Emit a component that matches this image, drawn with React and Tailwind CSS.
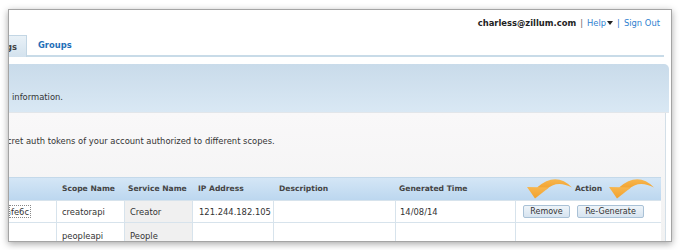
import React from "react";

function Arrow({ className }) {
  return (
    <svg className={className} width="48" height="22" viewBox="0 0 48 22">
      <defs>
        <linearGradient id="ag" x1="0" y1="0" x2="0" y2="1">
          <stop offset="0" stopColor="#f7b64e" />
          <stop offset="1" stopColor="#f2a12c" />
        </linearGradient>
      </defs>
      <path d="M47 10.5 Q31 -6 12 10.5 L21 12.5 Q32 2.5 47 10.5 Z" fill="url(#ag)" />
      <path d="M2 10 L24 10.5 L10 21.5 Z" fill="url(#ag)" />
    </svg>
  );
}

const cols = "grid grid-cols-[48px_68px_68px_81px_122px_120px_145px]";

export default function App() {
  return (
    <div className="w-[683px] h-[250px] bg-white pt-[9px] pl-[8px] font-['DejaVu_Sans',Verdana,sans-serif] text-[#333]">
      <div className="relative w-[664px] h-[233px] border border-[#a4a4a4] bg-white shadow-[0_2px_7px_rgba(0,0,0,0.35)] overflow-hidden flex flex-col">
        {/* header */}
        <div className="h-[25px] flex items-center justify-end pr-[11px] text-[8.4px] leading-[10px]">
          <span className="font-bold text-[#222]">charless@zillum.com</span>
          <span className="mx-[4px] text-[#666]">|</span>
          <span className="text-[#2f7fd0]">Help</span>
          <span className="ml-[1px] w-0 h-0 border-l-[3px] border-r-[3px] border-t-[4px] border-l-transparent border-r-transparent border-t-[#222]" />
          <span className="mx-[4px] text-[#2f7fd0]">|</span>
          <span className="text-[#2f7fd0]">Sign Out</span>
        </div>
        {/* tabs */}
        <div className="h-[22px] flex">
          <div className="w-[18px] h-[22px] overflow-hidden flex justify-end items-center pr-[9px] bg-gradient-to-b from-[#e9f1f7] to-[#d3e2ee] border-t border-r border-[#c3d6e4] text-[8.4px] font-bold text-[#444] leading-[10px]">
            <span className="whitespace-nowrap">Settings</span>
          </div>
          <div className="flex-1 mr-[7px] border-b-2 border-[#c8dbe8] flex items-center pl-[11px] pb-[1px]">
            <span className="text-[8.4px] font-bold text-[#1f6fb8] leading-[10px]">Groups</span>
          </div>
        </div>
        <div className="h-[7px]" />
        {/* blue panel */}
        <div className="h-[49px] mr-[2px] rounded-tr-[5px] bg-gradient-to-b from-[#c9dbea] to-[#d9e8f4] flex items-end pl-[3px] pb-[10px] border-b border-[#e2e6ea]">
          <span className="text-[8.4px] leading-[10px] text-[#333]">information.</span>
        </div>
        {/* grey panel */}
        <div className="flex-1 mr-[5px] border-r border-[#d3dfe8] bg-gradient-to-b from-[#f9f8f9] to-[#f2f2f2] flex flex-col">
          <div className="h-[64px] pt-[23px] overflow-hidden">
            <div className="-ml-[2px] text-[8.4px] leading-[10px] whitespace-nowrap">cret auth tokens of your account authorized to different scopes.</div>
          </div>
          <div className="w-[652px] flex-1 flex flex-col">
            <div className={`${cols} h-[23px] bg-gradient-to-b from-[#d4e6f6] to-[#bcd7ef] border-t border-[#c4d9ea] text-[7.6px] font-bold text-[#444] leading-[10px] items-center`}>
              <div />
              <div className="pl-[5px]">Scope Name</div>
              <div className="pl-[3px]">Service Name</div>
              <div className="pl-[5px]">IP Address</div>
              <div className="pl-[5px]">Description</div>
              <div className="pl-[3px]">Generated Time</div>
              <div className="text-center">Action</div>
            </div>
            <div className={`${cols} h-[23px] bg-white border-t border-b border-[#d7e3ec] text-[8.4px] leading-[10px]`}>
              <div className="flex items-center border-r border-[#d7e3ec]">
                <div className="w-[22px] h-[13px] border border-dotted border-[#888] overflow-hidden flex justify-end items-center pr-[1px]">
                  <span className="whitespace-nowrap">8c4afe6c</span>
                </div>
              </div>
              <div className="flex items-center pl-[5px] border-r border-[#d7e3ec]">creatorapi</div>
              <div className="flex items-center pl-[5px] bg-[#f0f0f0] border-r border-[#d7e3ec]">Creator</div>
              <div className="flex items-center pl-[6px] border-r border-[#d7e3ec]">121.244.182.105</div>
              <div className="flex items-center border-r border-[#d7e3ec]" />
              <div className="flex items-center pl-[4px] border-r border-[#d7e3ec]">14/08/14</div>
              <div className="flex items-center pl-[7px] gap-[7px]">
                <button className="w-[47px] h-[13px] rounded-[2px] border border-[#a9c1d6] bg-gradient-to-b from-[#eef4f9] to-[#d7e4f0] text-[8px] leading-[10px] text-[#333]">Remove</button>
                <button className="w-[67px] h-[13px] rounded-[2px] border border-[#a9c1d6] bg-gradient-to-b from-[#eef4f9] to-[#d7e4f0] text-[8px] leading-[10px] text-[#333]">Re-Generate</button>
              </div>
            </div>
            <div className={`${cols} flex-1 bg-white text-[8.4px] leading-[10px]`}>
              <div className="border-r border-[#d7e3ec]" />
              <div className="pl-[5px] pt-[8px] border-r border-[#d7e3ec]">peopleapi</div>
              <div className="pl-[5px] pt-[8px] bg-[#f0f0f0] border-r border-[#d7e3ec]">People</div>
              <div className="border-r border-[#d7e3ec]" />
              <div className="border-r border-[#d7e3ec]" />
              <div className="border-r border-[#d7e3ec]" />
              <div />
            </div>
          </div>
        </div>
        {/* arrows overlay */}
        <Arrow className="absolute left-[516px] top-[167px]" />
        <Arrow className="absolute left-[598px] top-[167px]" />
      </div>
    </div>
  );
}
